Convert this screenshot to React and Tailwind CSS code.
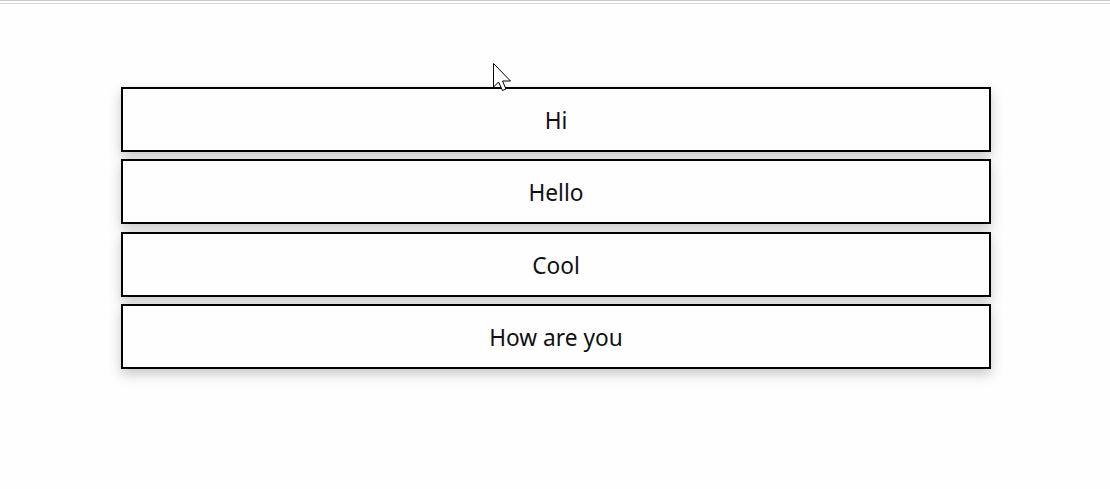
import React from "react";

const items = ["Hi", "Hello", "Cool", "How are you"];

export default function App() {
  return (
    <div className="relative w-[1110px] h-[489px] bg-[#fefefe] overflow-hidden" style={{ fontFamily: '"Noto Sans", "Open Sans", sans-serif' }}>
      <div className="h-px bg-[#c8c8c8]" />
      <div className="h-[2px]" />
      <div className="h-px bg-[#d6d6d6]" />
      <div className="pt-[83px] pl-[121px] flex flex-col gap-[7.33px]">
        {items.map((t) => (
          <div
            key={t}
            className="w-[870px] h-[65px] border-2 border-black bg-[#fefefe] flex items-center justify-center pt-[3px] text-[22.7px] text-[#111] shadow-[0_5px_12px_rgba(0,0,0,0.22)]"
          >
            {t}
          </div>
        ))}
      </div>
      <svg className="absolute left-[493px] top-[63px]" width="20" height="29" viewBox="0 0 20 29">
        <path d="M0.5 0.5 L0.5 24 L5.5 19 L9.5 27.5 L13 26 L9.5 18 L17.5 18 Z" fill="#fff" stroke="#000" strokeWidth="1" strokeLinejoin="miter" />
      </svg>
    </div>
  );
}
